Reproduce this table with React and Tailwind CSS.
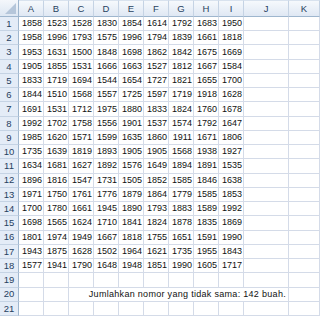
import React from 'react';

const cols = ['A', 'B', 'C', 'D', 'E', 'F', 'G', 'H', 'I', 'J', 'K'];

const data = [
  [1858, 1523, 1528, 1830, 1854, 1614, 1792, 1683, 1950],
  [1958, 1996, 1793, 1575, 1996, 1794, 1839, 1661, 1818],
  [1953, 1631, 1500, 1848, 1698, 1862, 1842, 1675, 1669],
  [1905, 1855, 1531, 1666, 1663, 1527, 1812, 1667, 1584],
  [1833, 1719, 1694, 1544, 1654, 1727, 1821, 1655, 1700],
  [1844, 1510, 1568, 1557, 1725, 1597, 1719, 1918, 1628],
  [1691, 1531, 1712, 1975, 1880, 1833, 1824, 1760, 1678],
  [1992, 1702, 1758, 1556, 1901, 1537, 1574, 1792, 1647],
  [1985, 1620, 1571, 1599, 1635, 1860, 1911, 1671, 1806],
  [1735, 1639, 1819, 1893, 1905, 1905, 1568, 1938, 1927],
  [1634, 1681, 1627, 1892, 1576, 1649, 1894, 1891, 1535],
  [1896, 1816, 1547, 1731, 1505, 1852, 1585, 1846, 1638],
  [1971, 1750, 1761, 1776, 1879, 1864, 1779, 1585, 1853],
  [1700, 1780, 1661, 1945, 1890, 1793, 1883, 1589, 1992],
  [1698, 1565, 1624, 1710, 1841, 1824, 1878, 1835, 1869],
  [1801, 1974, 1949, 1667, 1818, 1755, 1651, 1591, 1990],
  [1943, 1875, 1628, 1502, 1964, 1621, 1735, 1955, 1843],
  [1577, 1941, 1790, 1648, 1948, 1851, 1990, 1605, 1717],
];

const cell = 'border-r border-b border-[#d4dbe8] flex items-center justify-end pr-[1px] overflow-hidden whitespace-nowrap';
const rowHead =
  'bg-[#e4ecf7] border-r border-b border-r-[#9eb6ce] border-b-[#c5d3e4] flex items-center justify-center text-[#27415f] text-[9.5px]';

export default function App() {
  const rows = [];
  for (let r = 1; r <= 21; r++) {
    const vals = data[r - 1];
    rows.push(
      <div key={'h' + r} className={rowHead}>
        {r}
      </div>
    );
    if (r === 20) {
      rows.push(<div key="a20" className={cell} />);
      rows.push(<div key="b20" className={cell} />);
      rows.push(
        <div key="m20" className={cell + ' col-span-8 pr-[2px] tracking-[0.3px]'}>
          Jumlahkan nomor yang tidak sama: 142 buah.
        </div>
      );
      rows.push(<div key="k20" className={cell} />);
      continue;
    }
    cols.forEach((c, i) => {
      rows.push(
        <div key={c + r} className={cell}>
          {vals && i < 9 ? vals[i] : ''}
        </div>
      );
    });
  }

  return (
    <div className="w-[320px] h-[316px] overflow-hidden bg-white text-[#111] text-[9px] leading-none font-['Liberation_Sans',Arial,sans-serif]">
      <div className="grid h-[316px] grid-cols-[19px_repeat(9,25px)_45px_1fr] grid-rows-[17px_repeat(21,minmax(0,1fr))]">
        {/* corner */}
        <div className="relative border-r border-b border-r-[#9eb6ce] border-b-[#9eb6ce] bg-gradient-to-b from-[#f4f7fb] to-[#dde7f3]">
          <div className="absolute right-[2px] bottom-[2px] w-0 h-0 border-l-[11px] border-l-transparent border-b-[11px] border-b-[#b5c6da]" />
        </div>
        {cols.map((c) => (
          <div
            key={c}
            className="border-r border-b border-r-[#c5d3e4] border-b-[#9eb6ce] border-t border-t-[#d8e2ee] bg-gradient-to-b from-[#f6f9fc] to-[#dfe8f4] flex items-center justify-center text-[#27415f] text-[9.5px]"
          >
            {c}
          </div>
        ))}
        {rows}
      </div>
    </div>
  );
}
